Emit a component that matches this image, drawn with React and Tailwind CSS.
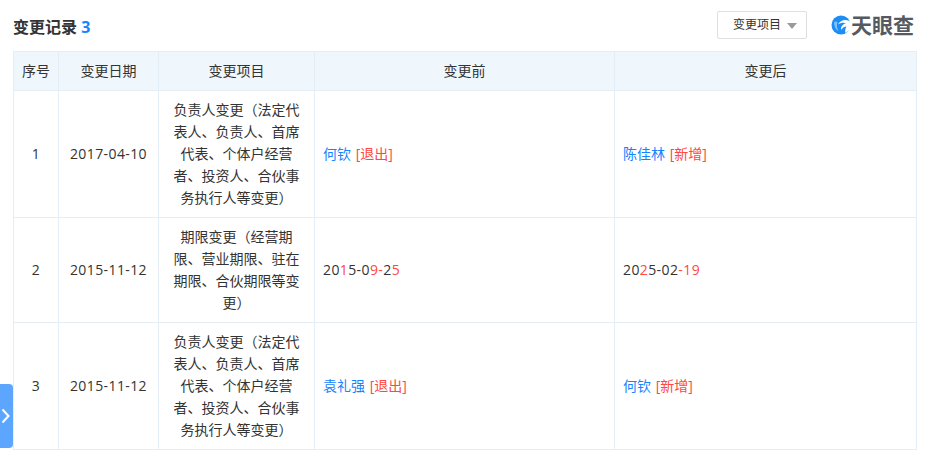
import React from 'react';

const PROJECT_A = '负责人变更（法定代表人、负责人、首席代表、个体户经营者、投资人、合伙事务执行人等变更）';
const PROJECT_B = '期限变更（经营期限、营业期限、驻在期限、合伙期限等变更）';

const Red = ({ children }) => <span className="text-[#ff4840]">{children}</span>;
const Blue = ({ children }) => <span className="text-[#1784ff]">{children}</span>;

const Person = ({ name, tag }) => (
  <>
    <Blue>{name}</Blue> <span className="ml-[1px]"><Red>[{tag}]</Red></span>
  </>
);

const Num = ({ children }) => <span className="tracking-[0.4px]">{children}</span>;

const rows = [
  {
    no: 1,
    date: '2017-04-10',
    project: PROJECT_A,
    before: <Person name="何钦" tag="退出" />,
    after: <Person name="陈佳林" tag="新增" />,
  },
  {
    no: 2,
    date: '2015-11-12',
    project: PROJECT_B,
    before: <Num>20<Red>1</Red>5-0<Red>9-</Red>2<Red>5</Red></Num>,
    after: <Num>20<Red>2</Red>5-02<Red>-19</Red></Num>,
  },
  {
    no: 3,
    date: '2015-11-12',
    project: PROJECT_A,
    before: <Person name="袁礼强" tag="退出" />,
    after: <Person name="何钦" tag="新增" />,
  },
];

const Logo = () => (
  <div className="flex items-center gap-0">
    <svg width="20" height="20" viewBox="0 0 20 20">
      <circle cx="10" cy="10" r="9.500" fill="#1c8cf6" />
      <path d="M20 7C15.500 3.500 9.500 4.500 7 9.500c2.500-1.800 5.500-2.200 8.200-1.200C12 9 9.800 11.500 10 15c1.200-2 3-3.300 5.500-3.500-1.200 1.800-1.600 4-1 6.500L20 14z" fill="#fff" />
      <path d="M3.500 6.500C2.500 10 4 14 7.500 16 5.800 13 5.500 10 6.500 7z" fill="#7fc1fa" />
    </svg>
    <span className="text-[21px] leading-none font-bold text-[#555a62]">天眼查</span>
  </div>
);

const App = () => {
  const th = 'border border-[#e3eef7] px-2 py-2 font-normal text-center';
  const td = 'border border-[#e3eef7] px-2 py-2 align-middle';

  return (
    <div
      className="relative h-[454px] w-[926px] overflow-hidden bg-white text-[14px] leading-[22px] text-[#333333]"
      style={{ fontFamily: '"Open Sans", "Noto Sans CJK SC", sans-serif' }}
    >
      <div className="flex h-[51px] items-start justify-between pl-[13px] pr-[12px] pt-[11px]">
        <h2 className="mt-[5px] text-[16px] font-bold leading-[22px] text-[#333333]">
          变更记录 <span className="text-[#1784ff]">3</span>
        </h2>
        <div className="flex items-center gap-[24px]">
          <button className="flex h-[28px] w-[90px] items-center gap-[6px] rounded-[2px] border border-[#dfdfdf] bg-white pl-[15px] text-[12px] text-[#333333]">
            变更项目
            <span className="mt-[1px] h-0 w-0 border-x-[5px] border-t-[6px] border-x-transparent border-t-[#999999]" />
          </button>
          <Logo />
        </div>
      </div>

      <table className="ml-[13px] w-[903px] table-fixed border-collapse">
        <colgroup>
          <col className="w-[45px]" />
          <col className="w-[100px]" />
          <col className="w-[156px]" />
          <col className="w-[300px]" />
          <col className="w-[302px]" />
        </colgroup>
        <thead>
          <tr className="bg-[#eff7fd]">
            <th className={th}>序号</th>
            <th className={th}>变更日期</th>
            <th className={th}>变更项目</th>
            <th className={th}>变更前</th>
            <th className={th}>变更后</th>
          </tr>
        </thead>
        <tbody>
          {rows.map((row) => (
            <tr key={row.no}>
              <td className={`${td} text-center`}><Num>{row.no}</Num></td>
              <td className={`${td} text-center`}><Num>{row.date}</Num></td>
              <td className={`${td} text-center`}>{row.project}</td>
              <td className={td}>{row.before}</td>
              <td className={td}>{row.after}</td>
            </tr>
          ))}
        </tbody>
      </table>

      {/* side tab */}
      <div className="absolute left-0 top-[384px] flex h-[64px] w-[13px] items-center justify-center rounded-r-[4px] bg-[#5ca6ff]">
        <svg className="mr-[3px]" width="9" height="16" viewBox="0 0 9 16" fill="none" stroke="#fff" strokeWidth="2">
          <path d="M1.500 1.500 7.500 8l-6 6.500" />
        </svg>
      </div>
    </div>
  );
};

export default App;
